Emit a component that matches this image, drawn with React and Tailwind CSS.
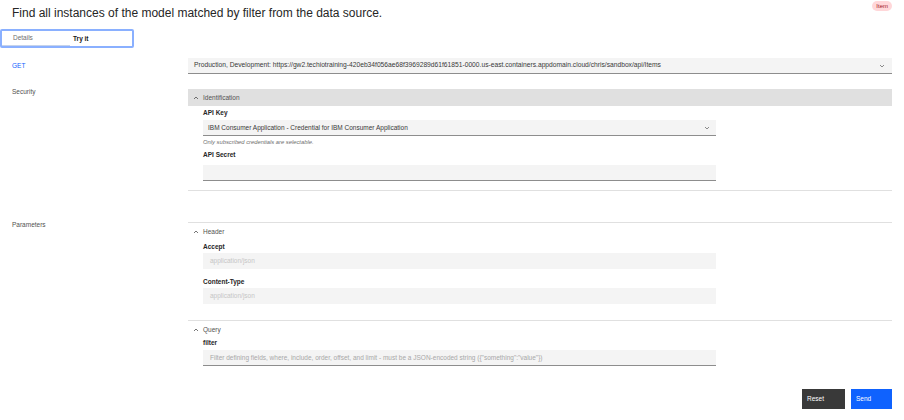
import React from "react";

function ChevronUp() {
  return (
    <svg width="6" height="6" viewBox="0 0 6 6" className="shrink-0">
      <polyline points="1,4 3,2 5,4" fill="none" stroke="#525252" strokeWidth="0.8" />
    </svg>
  );
}

function ChevronDown() {
  return (
    <svg width="6" height="6" viewBox="0 0 6 6" className="shrink-0">
      <polyline points="1,2 3,4 5,2" fill="none" stroke="#6f6f6f" strokeWidth="0.8" />
    </svg>
  );
}

function FieldLabel({ children, className = "" }) {
  return (
    <div className={`text-[6.5px] leading-[8px] font-bold text-[#262626] ${className}`}>
      {children}
    </div>
  );
}

function AccordionHead({ title, active }) {
  return (
    <div
      className={`h-[17px] flex items-center gap-[4px] pl-[5px] text-[6.5px] text-[#525252] ${
        active ? "bg-[#e0e0e0]" : ""
      }`}
    >
      <ChevronUp />
      <span>{title}</span>
    </div>
  );
}

function App() {
  return (
    <div className="w-[904px] min-h-[420px] bg-white font-['Liberation_Sans',Arial,sans-serif] text-[#161616]">
      {/* Title */}
      <div className="flex items-start justify-between px-3 pt-[1px]">
        <h1 className="text-[12px] leading-[16px] mt-[4px] text-[#262626]">
          Find all instances of the model matched by filter from the data source.
        </h1>
        <span className="h-[10px] px-[4px] rounded-full bg-[#ffd7d9] text-[#a2191f] text-[6px] leading-[10px]">
          Item
        </span>
      </div>

      {/* Tabs */}
      <div className="mt-[8px] w-[134px] h-[19px] border-2 border-[#8ab0ff] rounded-[2px] flex">
        <div className="w-[68px] h-full border-b border-[#c6d3ea] flex items-center pl-[11px] text-[6.5px] text-[#6f6f6f]">
          Details
        </div>
        <div className="flex-1 h-full flex items-center pl-[3px] text-[6.5px] font-bold text-[#161616]">
          Try it
        </div>
      </div>

      {/* GET row */}
      <div className="flex mt-[10px]">
        <div className="w-[188px] pl-3 h-[16px] flex items-center text-[6.5px] text-[#0f62fe]">GET</div>
        <div className="w-[704px] h-[16px] bg-[#f4f4f4] border-b border-[#8d8d8d] flex items-center justify-between pl-[6px] pr-[7px] text-[6.7px] text-[#393939]">
          <span>
            Production, Development: https://gw2.techiotraining-420eb34f056ae68f3969289d61f61851-0000.us-east.containers.appdomain.cloud/chris/sandbox/api/Items
          </span>
          <ChevronDown />
        </div>
      </div>

      {/* Security */}
      <div className="flex mt-[15px]">
        <div className="w-[188px] pl-3 text-[6.5px] leading-[6px] text-[#525252]">Security</div>
        <div className="w-[704px] border-b border-[#e0e0e0] pb-[9px]">
          <AccordionHead title="Identification" active />
          <div className="pl-[15px]">
            <FieldLabel className="mt-[3px]">API Key</FieldLabel>
            <div className="mt-[3px] w-[513px] h-[16px] bg-[#f4f4f4] border-b border-[#8d8d8d] flex items-center justify-between pl-[5px] pr-[6px] text-[6.5px] text-[#393939]">
              <span>IBM Consumer Application - Credential for IBM Consumer Application</span>
              <ChevronDown />
            </div>
            <div className="mt-[2px] text-[5.8px] leading-[8px] italic text-[#6f6f6f]">
              Only subscribed credentials are selectable.
            </div>
            <FieldLabel className="mt-[5px]">API Secret</FieldLabel>
            <div className="mt-[6px] w-[513px] h-[16px] bg-[#f4f4f4] border-b border-[#8d8d8d]" />
          </div>
        </div>
      </div>

      {/* Parameters */}
      <div className="flex mt-[31px]">
        <div className="w-[188px] pl-3 text-[6.5px] leading-[6px] text-[#525252]">Parameters</div>
        <div className="w-[704px]">
          <div className="border-t border-[#e0e0e0] pb-[16px]">
            <AccordionHead title="Header" />
            <div className="pl-[15px]">
              <FieldLabel className="mt-[3px]">Accept</FieldLabel>
              <div className="mt-[2px] w-[513px] h-[16px] bg-[#f4f4f4] flex items-center pl-[7px] text-[6.5px] text-[#c6c6c6]">
                application/json
              </div>
              <FieldLabel className="mt-[9px]">Content-Type</FieldLabel>
              <div className="mt-[2px] w-[513px] h-[16px] bg-[#f4f4f4] flex items-center pl-[7px] text-[6.5px] text-[#c6c6c6]">
                application/json
              </div>
            </div>
          </div>
          <div className="border-t border-[#e0e0e0]">
            <AccordionHead title="Query" />
            <div className="pl-[15px]">
              <FieldLabel className="mt-[1px]">filter</FieldLabel>
              <div className="mt-[3px] w-[513px] h-[16px] bg-[#f4f4f4] border-b border-[#8d8d8d] flex items-center pl-[7px] text-[6.5px] text-[#a8a8a8]">
                Filter defining fields, where, include, order, offset, and limit - must be a JSON-encoded string ({'{'}"something":"value"{'}'})
              </div>
            </div>
          </div>
        </div>
      </div>

      {/* Actions */}
      <div className="flex justify-end gap-[6px] pr-3 mt-[23px] pb-[11px]">
        <button className="w-[43px] h-[20px] bg-[#393939] text-white text-[6.5px] text-left pl-[5px]">Reset</button>
        <button className="w-[41px] h-[20px] bg-[#0f62fe] text-white text-[6.5px] text-left pl-[5px]">Send</button>
      </div>
    </div>
  );
}

export default App;
